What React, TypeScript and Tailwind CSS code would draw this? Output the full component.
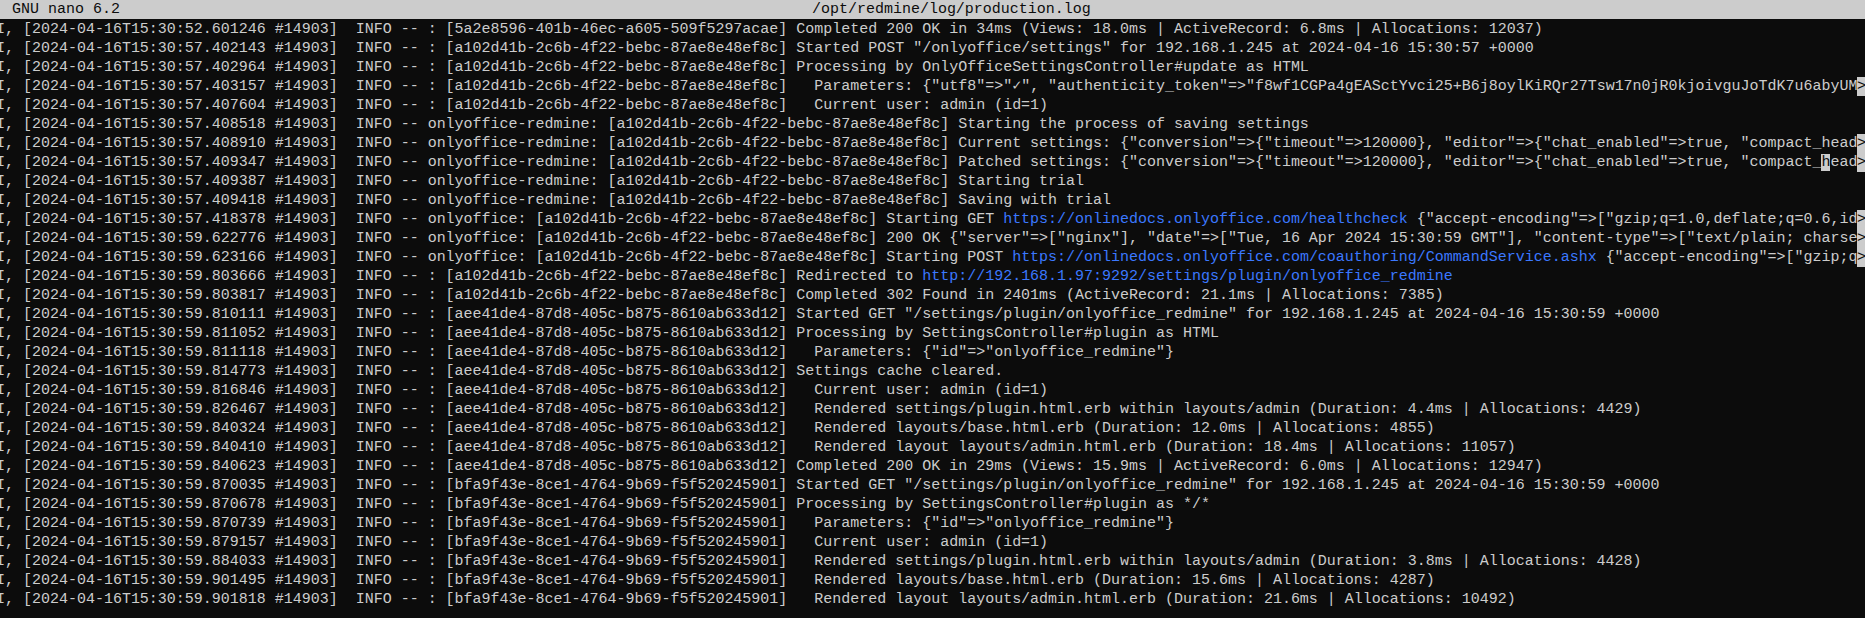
const mono = "font-['Liberation_Mono','DejaVu_Sans_Mono',monospace]";

const bfa = '[bfa9f43e-8ce1-4764-9b69-f5f520245901]';
const aee = '[aee41de4-87d8-405c-b875-8610ab633d12]';
const a10 = '[a102d41b-2c6b-4f22-bebc-87ae8e48ef8c]';

const rows: string[][] = [
  ['52.601246', ': [5a2e8596-401b-46ec-a605-509f5297acae] Completed 200 OK in 34ms (Views: 18.0ms | ActiveRecord: 6.8ms | Allocations: 12037)'],
  ['57.402143', `: ${a10} Started POST "/onlyoffice/settings" for 192.168.1.245 at 2024-04-16 15:30:57 +0000`],
  ['57.402964', `: ${a10} Processing by OnlyOfficeSettingsController#update as HTML`],
  ['57.403157', `: ${a10}   Parameters: {"utf8"=>"✓", "authenticity_token"=>"f8wf1CGPa4gEASctYvci25+B6j8oylKiRQr27Tsw17n0jR0kjoivguJoTdK7u6abyUM`, '>'],
  ['57.407604', `: ${a10}   Current user: admin (id=1)`],
  ['57.408518', `onlyoffice-redmine: ${a10} Starting the process of saving settings`],
  ['57.408910', `onlyoffice-redmine: ${a10} Current settings: {"conversion"=>{"timeout"=>120000}, "editor"=>{"chat_enabled"=>true, "compact_head`, '>'],
  ['57.409347', `onlyoffice-redmine: ${a10} Patched settings: {"conversion"=>{"timeout"=>120000}, "editor"=>{"chat_enabled"=>true, "compact_head`, '>'],
  ['57.409387', `onlyoffice-redmine: ${a10} Starting trial`],
  ['57.409418', `onlyoffice-redmine: ${a10} Saving with trial`],
  ['57.418378', `onlyoffice: ${a10} Starting GET https://onlinedocs.onlyoffice.com/healthcheck {"accept-encoding"=>["gzip;q=1.0,deflate;q=0.6,id`, '>'],
  ['59.622776', `onlyoffice: ${a10} 200 OK {"server"=>["nginx"], "date"=>["Tue, 16 Apr 2024 15:30:59 GMT"], "content-type"=>["text/plain; charse`, '>'],
  ['59.623166', `onlyoffice: ${a10} Starting POST https://onlinedocs.onlyoffice.com/coauthoring/CommandService.ashx {"accept-encoding"=>["gzip;q`, '>'],
  ['59.803666', `: ${a10} Redirected to http://192.168.1.97:9292/settings/plugin/onlyoffice_redmine`],
  ['59.803817', `: ${a10} Completed 302 Found in 2401ms (ActiveRecord: 21.1ms | Allocations: 7385)`],
  ['59.810111', `: ${aee} Started GET "/settings/plugin/onlyoffice_redmine" for 192.168.1.245 at 2024-04-16 15:30:59 +0000`],
  ['59.811052', `: ${aee} Processing by SettingsController#plugin as HTML`],
  ['59.811118', `: ${aee}   Parameters: {"id"=>"onlyoffice_redmine"}`],
  ['59.814773', `: ${aee} Settings cache cleared.`],
  ['59.816846', `: ${aee}   Current user: admin (id=1)`],
  ['59.826467', `: ${aee}   Rendered settings/plugin.html.erb within layouts/admin (Duration: 4.4ms | Allocations: 4429)`],
  ['59.840324', `: ${aee}   Rendered layouts/base.html.erb (Duration: 12.0ms | Allocations: 4855)`],
  ['59.840410', `: ${aee}   Rendered layout layouts/admin.html.erb (Duration: 18.4ms | Allocations: 11057)`],
  ['59.840623', `: ${aee} Completed 200 OK in 29ms (Views: 15.9ms | ActiveRecord: 6.0ms | Allocations: 12947)`],
  ['59.870035', `: ${bfa} Started GET "/settings/plugin/onlyoffice_redmine" for 192.168.1.245 at 2024-04-16 15:30:59 +0000`],
  ['59.870678', `: ${bfa} Processing by SettingsController#plugin as */*`],
  ['59.870739', `: ${bfa}   Parameters: {"id"=>"onlyoffice_redmine"}`],
  ['59.879157', `: ${bfa}   Current user: admin (id=1)`],
  ['59.884033', `: ${bfa}   Rendered settings/plugin.html.erb within layouts/admin (Duration: 3.8ms | Allocations: 4428)`],
  ['59.901495', `: ${bfa}   Rendered layouts/base.html.erb (Duration: 15.6ms | Allocations: 4287)`],
  ['59.901818', `: ${bfa}   Rendered layout layouts/admin.html.erb (Duration: 21.6ms | Allocations: 10492)`],
];

function LogText({ text, cursor }: { text: string; cursor: boolean }) {
  // urls are coloured by the terminal
  const parts = text.split(/(https?:\/\/[^\s]+)/);
  return (
    <>
      {parts.map((p, i) => {
        if (/^https?:/.test(p)) return <span key={i} className="text-[#3b78ff]">{p}</span>;
        if (cursor && p.endsWith('_head')) {
          return (
            <span key={i}>
              {p.slice(0, -4)}
              <span className="bg-[#cccccc] text-[#0c0c0c]">h</span>
              ead
            </span>
          );
        }
        return <span key={i}>{p}</span>;
      })}
    </>
  );
}

export default function App() {
  return (
    <div className={`w-[1865px] h-[618px] overflow-hidden bg-[#0c0c0c] text-[#cccccc] text-[14.99px] leading-[19px] ${mono}`}>
      <div className="flex h-[19px] bg-[#cccccc] text-[#0c0c0c] whitespace-pre">
        <span className="w-[812px] pl-[12px]">GNU nano 6.2</span>
        <span>/opt/redmine/log/production.log</span>
      </div>
      <div className="pt-px">
        {rows.map((r, i) => (
          <div key={r[0]} className="flex h-[19px] whitespace-pre">
            <div className="flex-1 min-w-0 overflow-hidden -ml-[4px]">
              I, [2024-04-16T15:30:{r[0]} #14903]  INFO -- <LogText text={r[1]} cursor={i === 7} />
            </div>
            {r[2] && <span className="w-[8px] overflow-hidden bg-[#cccccc] text-[#0c0c0c]">{r[2]}</span>}
          </div>
        ))}
      </div>
    </div>
  );
}
